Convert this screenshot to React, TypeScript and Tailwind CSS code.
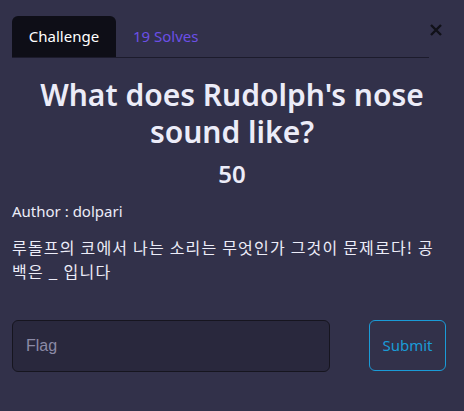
export default function App() {
  return (
    <div className="relative h-[411px] w-[464px] overflow-hidden bg-[#32314a] font-['Noto_Sans','Noto_Sans_CJK_KR',sans-serif] text-[#ececf8]">
      {/* Close */}
      <button className="absolute right-[22px] top-[24px] text-[#111118]">
        <svg width="12" height="12" viewBox="0 0 12 12" fill="none" stroke="currentColor" strokeWidth="2.4">
          <path d="M1 1l10 10M11 1L1 11" />
        </svg>
      </button>

      <div className="px-3 pt-4">
        {/* Tabs */}
        <div className="mr-[23px] flex border-b border-[#1c1b2c]">
          <div className="flex h-[41px] w-[104px] items-center justify-center rounded-t-md bg-[#0e0e17] text-[15px] text-white">
            Challenge
          </div>
          <div className="flex h-[41px] items-center px-[17px] text-[15px] text-[#6b4fe6]">19 Solves</div>
        </div>

        {/* Title */}
        <h1 className="mt-[18px] text-center text-[30px] font-semibold leading-[37px]">
          What does Rudolph's nose
          <br />
          sound like?
        </h1>
        <div className="mt-[7px] text-center text-[24px] font-semibold leading-[34px]">50</div>

        <p className="mt-[9px] text-[15px] leading-[22px]">Author : dolpari</p>

        <p className="mt-[13px] font-['Noto_Sans_CJK_KR',sans-serif] text-[16px] leading-[24px] tracking-[1.2px]">
          루돌프의 코에서 나는 소리는 무엇인가 그것이 문제로다! 공
          <br />
          백은 _ 입니다
        </p>

        {/* Flag form */}
        <div className="mt-[37px] flex items-start justify-between pr-[6px]">
          <div className="flex h-[52px] w-[318px] items-center rounded-md border border-[#16151f] bg-[#29283d] px-[13px] font-['Liberation_Sans',sans-serif] text-[16px] text-[#8b8aa6]">
            Flag
          </div>
          <button className="h-[51px] w-[77px] rounded-md border border-[#1a9bd7] text-[15px] text-[#1a9bd7]">
            Submit
          </button>
        </div>
      </div>
    </div>
  );
}
